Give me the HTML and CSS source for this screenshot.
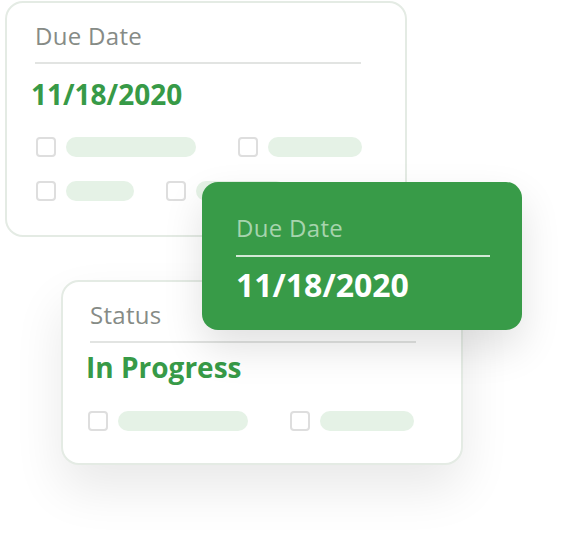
FILE: index.html
```html
<!DOCTYPE html>
<html lang="en">

<head>
    <meta charset="UTF-8">
    <meta name="viewport" content="width=device-width, initial-scale=1.0">
    <title>Task Cards</title>
    <link rel="stylesheet" href="styles.css">
</head>

<body>
    <div class="stage">
        <div class="card card-due">
            <div class="label">Due Date</div>
            <div class="divider"></div>
            <div class="value">11/18/2020</div>
            <div class="rows">
                <div class="row">
                    <span class="check"></span><span class="pill" style="width: 130px;"></span>
                    <span class="check gap-42"></span><span class="pill" style="width: 94px;"></span>
                </div>
                <div class="row">
                    <span class="check"></span><span class="pill" style="width: 68px;"></span>
                    <span class="check gap-32"></span><span class="pill" style="width: 90px;"></span>
                </div>
            </div>
        </div>

        <div class="card card-status">
            <div class="label">Status</div>
            <div class="divider"></div>
            <div class="value">In Progress</div>
            <div class="rows">
                <div class="row">
                    <span class="check"></span><span class="pill" style="width: 130px;"></span>
                    <span class="check gap-42"></span><span class="pill" style="width: 94px;"></span>
                </div>
            </div>
        </div>

        <div class="popup">
            <div class="label">Due Date</div>
            <div class="divider"></div>
            <div class="value">11/18/2020</div>
        </div>
    </div>
</body>

</html>
```

FILE: styles.css
```css
body {
    margin: 0;
    font-family: 'Open Sans', 'Noto Sans', sans-serif;
    background-color: white;
}

.stage {
    position: relative;
    width: 582px;
    height: 556px;
}

.card {
    position: absolute;
    box-sizing: border-box;
    width: 402px;
    background-color: white;
    border: 2px solid #e4ebe4;
    border-radius: 18px;
}

.card-due {
    left: 5px;
    top: 1px;
    height: 236px;
    padding: 18px 0 0 28px;
}

.card-status {
    left: 61px;
    top: 280px;
    height: 185px;
    padding: 18px 0 0 25px;
    box-shadow: 0 24px 50px rgba(0, 0, 0, 0.09);
}

.label {
    font-size: 24px;
    line-height: 30px;
    letter-spacing: 0.3px;
    color: #868b86;
}

.card-status .label {
    margin-left: 2px;
}

.divider {
    width: 326px;
    height: 2px;
    margin-top: 11px;
    background-color: #e2e4e2;
}

.value {
    margin-top: 13px;
    margin-left: -4px;
    font-size: 28px;
    line-height: 34px;
    font-weight: bold;
    color: #379a47;
}

.card-status .divider {
    margin-left: 2px;
}

.card-status .value {
    margin-top: 7px;
    margin-left: -2px;
}

.card-status .rows {
    margin-top: 27px;
}

.card-status .check {
    margin-left: 0;
}

.rows {
    margin-top: 26px;
    display: flex;
    flex-direction: column;
    gap: 24px;
}

.row {
    display: flex;
    align-items: center;
}

.check {
    box-sizing: border-box;
    width: 20px;
    height: 20px;
    margin-left: 1px;
    border: 2px solid #dedede;
    border-radius: 4px;
}

.pill {
    height: 20px;
    margin-left: 10px;
    border-radius: 10px;
    background-color: #e5f2e6;
}

.card-status .gap-42 {
    margin-left: 42px;
}

.gap-42 {
    margin-left: 42px;
}

.gap-32 {
    margin-left: 32px;
}

.popup {
    position: absolute;
    left: 202px;
    top: 182px;
    box-sizing: border-box;
    width: 320px;
    height: 148px;
    padding: 31px 0 0 34px;
    background-color: #389b48;
    border-radius: 16px;
    box-shadow: 0 18px 40px rgba(0, 0, 0, 0.12);
}

.popup .label {
    color: #a6d4ad;
}

.popup .divider {
    width: 254px;
    margin-top: 12px;
    background-color: #d3e9d6;
}

.popup .value {
    margin-top: 9px;
    margin-left: 0;
    font-size: 32px;
    line-height: 38px;
    color: white;
}
```
